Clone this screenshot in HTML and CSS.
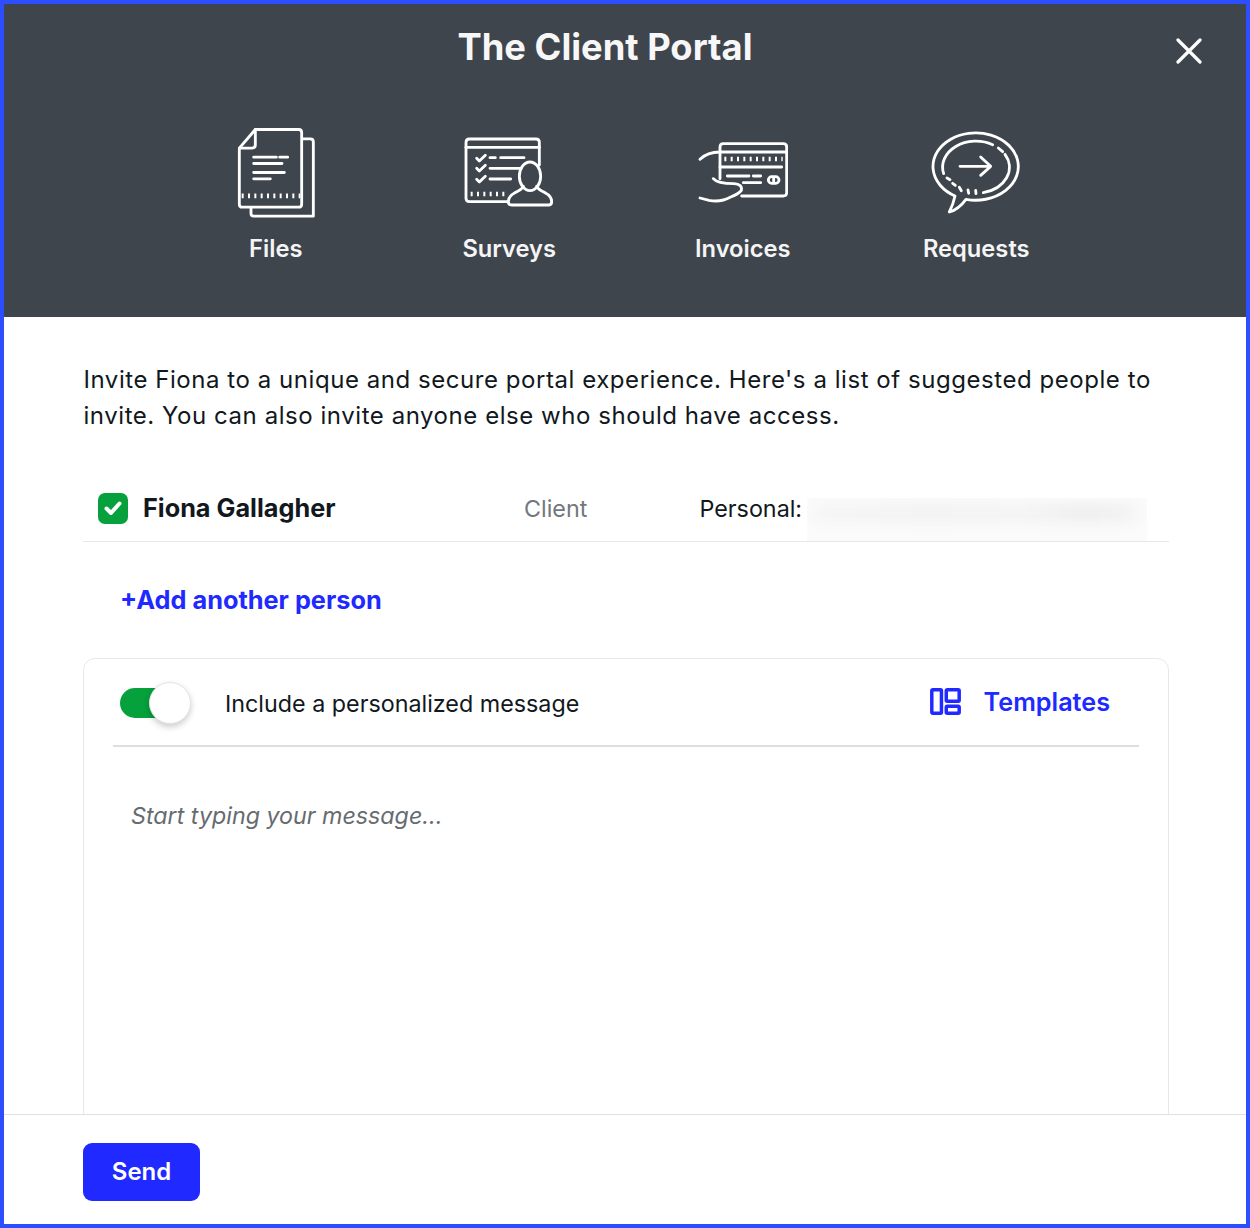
FILE: index.html
```html
<!DOCTYPE html>
<html lang="en">
<head>
<meta charset="utf-8">
<title>The Client Portal</title>
<link rel="stylesheet" href="styles.css">
</head>
<body>
<div class="frame">
  <header class="hero">
    <h1 class="hero-title">The Client Portal</h1>
    <button class="close" aria-label="Close">
      <svg viewBox="0 0 26 26" width="26" height="26"><path d="M2 2 L24 24 M24 2 L2 24"/></svg>
    </button>
    <div class="features">
      <div class="feature">
        <div class="feature-icon">
          <svg class="art art-files" width="80" height="93" viewBox="50 35 240 278">
            <path d="M57 98 L105 42 H235 Q244 42 244 51 V266 Q244 275 235 275 H66 Q57 275 57 266 Z"/>
            <path d="M105 42 V88 Q105 98 95 98 H57"/>
            <path d="M246 70 H270 Q279 70 279 79 V302 H100 Q92 302 92 294 V276"/>
            <path d="M100 125 H168 M178 125 H202 M100 144 H185 M100 171 H192 M100 190 H150"/>
            <path class="ticks" d="M64 241 H240"/>
          </svg>
        </div>
        <span class="feature-label">Files</span>
      </div>
      <div class="feature">
        <div class="feature-icon">
          <svg class="art" width="90" height="72" viewBox="732 66 270 216">
            <path d="M862 260 H748 Q738 260 738 250 V82 Q738 72 748 72 H948 Q958 72 958 82 V150"/>
            <path d="M738 97 H958"/>
            <path d="M770 130 L778 138 L796 121 M770 160 L778 168 L796 151 M770 193 L778 201 L796 184"/>
            <path d="M810 128 H826 M842 128 H912 M810 160 H903 M810 192 H872"/>
            <path class="ticks" d="M752 237 H862"/>
            <ellipse cx="930" cy="184" rx="32" ry="43"/>
            <path d="M910 214 Q905 224 885 233 Q865 243 865 260 Q865 270 875 270 H985 Q995 270 995 260 Q995 243 975 233 Q955 224 950 214"/>
          </svg>
        </div>
        <span class="feature-label">Surveys</span>
      </div>
      <div class="feature">
        <div class="feature-icon">
          <svg class="art" width="90" height="62" viewBox="52 80 270 186">
            <path d="M118 190 V95 Q118 85 128 85 H308 Q318 85 318 95 V232 Q318 242 308 242 H183"/>
            <path d="M118 110 H318 M118 155 H303"/>
            <path class="ticks" d="M131 131 H306"/>
            <path d="M140 182 H205 M218 182 H240 M188 202 H240"/>
            <rect x="263" y="184" width="32" height="20" rx="10"/>
            <path d="M279 188 V200"/>
            <path d="M58 132 Q80 110 118 110"/>
            <path d="M98 190 Q110 205 160 205 Q186 207 182 225 Q175 235 150 245 Q120 262 85 255 L58 248"/>
          </svg>
        </div>
        <span class="feature-label">Invoices</span>
      </div>
      <div class="feature">
        <div class="feature-icon">
          <svg class="art" width="90" height="84" viewBox="753 50 270 250">
            <path d="M858 254 Q835 285 808 292 Q820 268 825 244 A128 101 0 1 1 858 254 Z"/>
            <path d="M938 90 A100 78 0 0 0 791 177"/>
            <path d="M910 234 A100 78 0 0 0 975 119"/>
            <path d="M955 100 L968 111"/>
            <path d="M801 190 L810 195 M818 206 L826 212 M838 218 L844 228 M864 226 L866 236 M887 227 L888 237"/>
            <path d="M840 155 H932 M902 127 L932 155 L902 182"/>
          </svg>
        </div>
        <span class="feature-label">Requests</span>
      </div>
    </div>
  </header>

  <main class="content">
    <p class="intro">Invite Fiona to a unique and secure portal experience. Here's a list of suggested people to invite. You can also invite anyone else who should have access.</p>

    <div class="person">
      <span class="checkbox">
        <svg viewBox="0 0 30 30" width="30" height="30"><path d="M8.5 15.5 L13 20 L21.5 10.5"/></svg>
      </span>
      <span class="person-name">Fiona Gallagher</span>
      <span class="person-role">Client</span>
      <span class="person-email-label">Personal:</span>
      <span class="redacted"><span class="redacted-blob"></span></span>
    </div>

    <a class="add-person" href="#">+Add another person</a>

    <section class="message-card">
      <div class="message-head">
        <span class="toggle"><span class="toggle-thumb"></span></span>
        <span class="message-label">Include a personalized message</span>
        <a class="templates" href="#">
          <svg class="templates-icon" viewBox="0 0 32 28" width="31" height="27">
            <rect x="1.8" y="1.8" width="10" height="24.4" rx="1"/>
            <rect x="16.8" y="1.8" width="13.4" height="12" rx="1"/>
            <rect x="16.8" y="19" width="13.4" height="7.2" rx="1"/>
          </svg>
          <span>Templates</span>
        </a>
      </div>
      <div class="message-body">Start typing your message...</div>
    </section>
  </main>

  <footer class="actions">
    <button class="send">Send</button>
  </footer>
</div>
</body>
</html>
```
FILE: styles.css
```css
* { box-sizing: border-box; }
html, body { margin: 0; padding: 0; }
body { font-family: Inter, "Liberation Sans", sans-serif; color: #111820; background: #fff; }

.frame {
  width: 1250px;
  height: 1228px;
  border: 4px solid #2d4eff;
  display: flex;
  flex-direction: column;
  overflow: hidden;
  position: relative;
}

.hero {
  flex: none;
  height: 313px;
  background: #3e454d;
  padding-top: 21px;
  display: flex;
  flex-direction: column;
  align-items: center;
  position: relative;
}
.hero-title {
  margin: 0 40px 0 0;
  font-size: 36.3px;
  line-height: 44px;
  font-weight: 700;
  color: #f7f7f7;
}
.close {
  position: absolute;
  top: 34px;
  right: 44px;
  width: 26px;
  height: 26px;
  padding: 0;
  border: 0;
  background: none;
  display: block;
}
.close svg { display: block; fill: none; stroke: #fff; stroke-width: 3.2; stroke-linecap: round; }

.features {
  margin-top: 53px;
  padding-left: 2px;
  display: grid;
  grid-template-columns: repeat(4, 233.5px);
}
.feature { display: flex; flex-direction: column; align-items: center; }
.feature-icon { height: 102px; display: flex; align-items: center; justify-content: center; }
.art { display: block; fill: none; stroke: #fff; stroke-width: 8.5; stroke-linecap: round; stroke-linejoin: round; }
.art-files { margin-left: 2px; }
.art .ticks { stroke-width: 14; stroke-linecap: butt; stroke-dasharray: 6 13; }
.feature-label {
  margin-top: 10px;
  font-size: 23.7px;
  line-height: 30px;
  font-weight: 600;
  color: #f5f5f5;
}

.content {
  flex: 1;
  min-height: 0;
  overflow: hidden;
  padding: 45px 77px 0 79px;
}
.intro {
  margin: 0;
  padding-left: 0.5px;
  font-size: 24px;
  line-height: 36px;
  letter-spacing: 0.55px;
  color: #111820;
}

.person {
  margin-top: 48px;
  height: 60px;
  border-bottom: 1px solid #e8e8e8;
  display: flex;
  align-items: center;
  padding: 0 0 6px 15px;
  position: relative;
}
.checkbox {
  width: 30px;
  height: 31px;
  border-radius: 7px;
  background: #06a03c;
  flex: none;
  display: block;
}
.checkbox svg { display: block; fill: none; stroke: #fff; stroke-width: 4; stroke-linecap: round; stroke-linejoin: round; }
.person-name { margin: -2px 0 0 15px; width: 381px; flex: none; font-size: 25.25px; font-weight: 700; }
.person-role { width: 175.5px; flex: none; font-size: 23.3px; color: #71777d; }
.person-email-label { flex: none; font-size: 23.3px; color: #111820; }
.redacted {
  flex: none;
  margin: 0 0 -6px 5px;
  width: 340px;
  height: 43px;
  align-self: flex-end;
  background: #fbfbfb;
  overflow: hidden;
  display: block;
}
.redacted-blob {
  display: block;
  margin: 6px 0 0 8px;
  width: 320px;
  height: 18px;
  background: linear-gradient(90deg, #f5f5f5, #f1f1f1 35%, #f3f3f3 65%, #ededed 85%, #f2f2f2);
  filter: blur(7px);
}

.add-person {
  display: block;
  margin: 40px 0 0 37px;
  font-size: 25.3px;
  line-height: 36px;
  font-weight: 700;
  color: #2029ff;
  text-decoration: none;
}

.message-card {
  margin-top: 40px;
  height: 520px;
  border: 1px solid #e8e8e8;
  border-radius: 12px;
  padding: 0 29px;
}
.message-head {
  height: 88px;
  border-bottom: 2px solid #dedede;
  display: flex;
  align-items: center;
  padding: 1px 29px 0 7px;
}
.toggle {
  width: 50px;
  height: 30px;
  background: #06a03c;
  border-radius: 15px;
  position: relative;
  flex: none;
  display: block;
}
.toggle-thumb {
  position: absolute;
  left: 29px;
  top: -6px;
  width: 42px;
  height: 42px;
  border-radius: 50%;
  background: #fff;
  border: 1px solid #e4e4e4;
  box-shadow: 0 3px 6px rgba(0, 0, 0, 0.2);
}
.message-label { margin-left: 55px; padding-top: 2px; font-size: 23.3px; color: #111820; }
.templates {
  margin: 0 0 2px auto;
  display: flex;
  align-items: center;
  gap: 23px;
  font-size: 25.2px;
  font-weight: 600;
  color: #2029ff;
  text-decoration: none;
}
.templates-icon { display: block; fill: none; stroke: #2029ff; stroke-width: 3.6; }
.message-body {
  padding: 53px 0 0 18px;
  font-size: 23.25px;
  line-height: 32px;
  font-style: italic;
  color: #666b70;
}

.actions {
  flex: none;
  height: 110px;
  border-top: 1px solid #e0e0e0;
  background: #fff;
  padding: 28px 79px;
}
.send {
  display: block;
  width: 117px;
  height: 58px;
  border: 0;
  border-radius: 9px;
  background: #2029ff;
  color: #fff;
  font-family: inherit;
  font-size: 24px;
  line-height: 58px;
  padding: 0;
  font-weight: 600;
}
```
